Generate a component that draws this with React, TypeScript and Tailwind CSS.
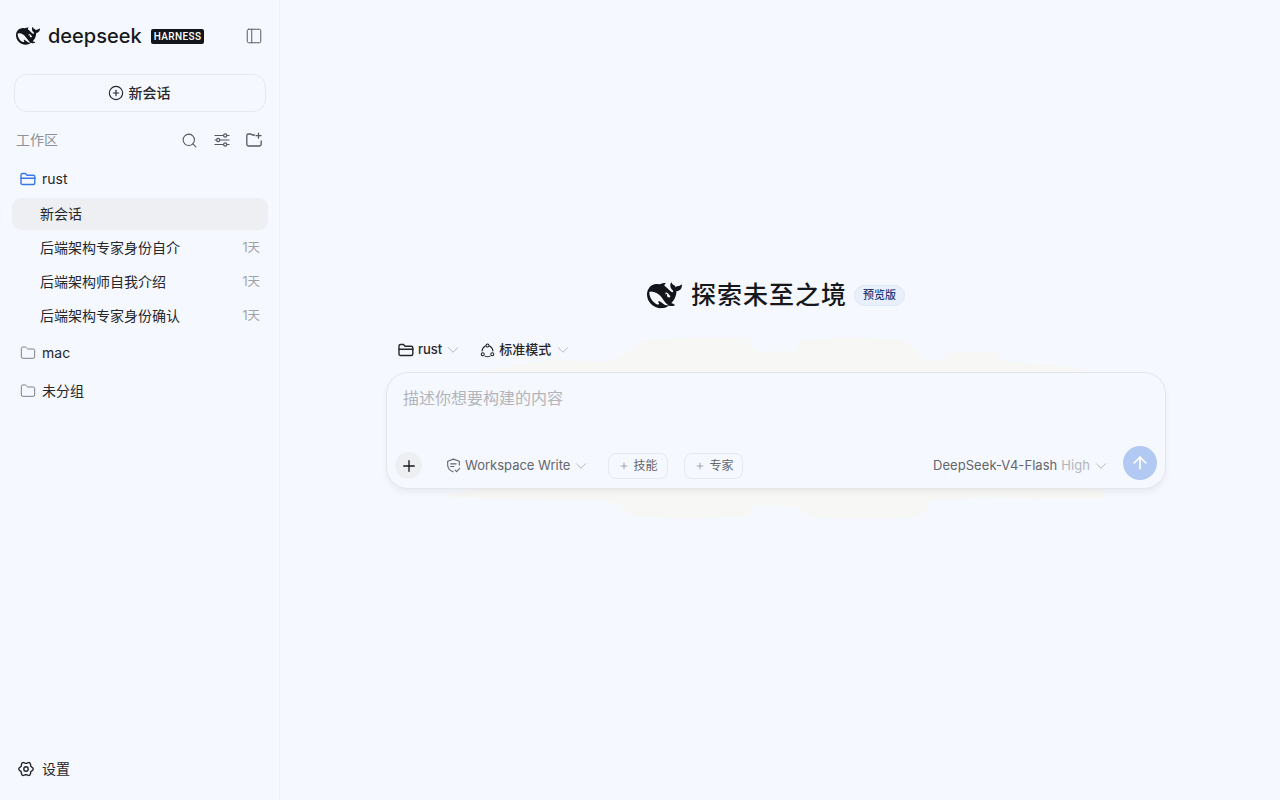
import React from 'react';
import { ArrowUp, ChevronDown, CirclePlus, Folder, PanelLeft, Plus, Search } from 'lucide-react';

const sessions = [
  { id: '1', title: '新会话', age: '', active: true },
  { id: '2', title: '后端架构专家身份自介', age: '1天', active: false },
  { id: '3', title: '后端架构师自我介绍', age: '1天', active: false },
  { id: '4', title: '后端架构专家身份确认', age: '1天', active: false },
];

const Whale = ({ className }: { className: string }) => (
  <svg viewBox="0 0 24 24" className={className} fill="#14151a">
    <path d="M23.748 4.482c-.254-.124-.364.113-.512.234-.051.039-.094.09-.137.136-.372.397-.806.657-1.373.626-.829-.046-1.537.214-2.163.848-.133-.782-.575-1.248-1.247-1.548-.352-.156-.708-.311-.955-.65-.172-.241-.219-.51-.305-.774-.055-.16-.11-.323-.293-.35-.2-.031-.278.136-.356.276-.313.572-.434 1.202-.422 1.84.027 1.436.633 2.58 1.838 3.393.137.093.172.187.129.323-.082.28-.18.552-.266.833-.055.179-.137.217-.329.14a5.526 5.526 0 01-1.736-1.18c-.857-.828-1.631-1.742-2.597-2.458a11.365 11.365 0 00-.689-.471c-.985-.957.13-1.743.388-1.836.27-.098.093-.432-.779-.428-.872.004-1.67.295-2.687.684a3.055 3.055 0 01-.465.137 9.597 9.597 0 00-2.883-.102c-1.885.21-3.39 1.102-4.497 2.623C.082 8.606-.231 10.684.152 12.85c.403 2.284 1.569 4.175 3.36 5.653 1.858 1.533 3.997 2.284 6.438 2.14 1.482-.085 3.133-.284 4.994-1.86.47.234.962.327 1.78.397.63.059 1.236-.03 1.705-.128.735-.156.684-.837.419-.961-2.155-1.004-1.682-.595-2.113-.926 1.096-1.296 2.746-2.642 3.392-7.003.05-.347.007-.565 0-.845-.004-.17.035-.237.23-.256a4.173 4.173 0 001.545-.475c1.396-.763 1.96-2.015 2.093-3.517.02-.23-.004-.467-.247-.588zM11.581 18c-2.089-1.642-3.102-2.183-3.52-2.16-.392.024-.321.471-.235.763.09.288.207.486.371.739.114.167.192.416-.113.603-.673.416-1.842-.14-1.897-.167-1.361-.802-2.5-1.86-3.301-3.307-.774-1.393-1.224-2.887-1.298-4.482-.02-.386.093-.522.477-.592a4.696 4.696 0 011.529-.039c2.132.312 3.946 1.265 5.468 2.774.868.86 1.525 1.887 2.202 2.891.72 1.066 1.494 2.082 2.48 2.914.348.292.625.514.891.677-.802.09-2.14.11-3.054-.614zm1-6.44a.306.306 0 01.415-.287.302.302 0 01.2.288.306.306 0 01-.31.307.303.303 0 01-.304-.308zm3.11 1.596c-.2.081-.399.151-.59.16a1.245 1.245 0 01-.798-.254c-.274-.23-.47-.358-.552-.758a1.73 1.73 0 01.016-.588c.07-.327-.008-.537-.239-.727-.187-.156-.426-.199-.688-.199a.559.559 0 01-.254-.078c-.11-.054-.2-.19-.114-.358.028-.054.16-.186.192-.21.356-.202.767-.136 1.146.016.352.144.618.408 1.001.782.391.451.462.576.685.914.176.265.336.537.445.848.067.195-.019.354-.25.452z" />
  </svg>
);

const FolderTab = ({ className }: { className: string }) => (
  <svg viewBox="0 0 16 16" className={className} fill="none" stroke="currentColor" strokeWidth="1.400" strokeLinecap="round" strokeLinejoin="round">
    <path d="M1 12V4c0-.9.6-1.500 1.500-1.500h3l1.500 1.700h6.300c.9 0 1.500.6 1.500 1.500V12c0 .9-.6 1.500-1.500 1.500h-10.800C1.600 13.500 1 12.900 1 12z" />
    <path d="M1 7.200h14" />
  </svg>
);

const SlidersIcon = () => (
  <svg viewBox="0 0 16 16" className="h-4 w-4" fill="none" stroke="#55585f" strokeWidth="1.200" strokeLinecap="round">
    <path d="M1 3.500h8.500M13 3.500h2M1 8h1.500M6 8h9M1 12.500h8.500M13 12.500h2" />
    <circle cx="11.200" cy="3.500" r="1.600" />
    <circle cx="4.200" cy="8" r="1.600" />
    <circle cx="11.200" cy="12.500" r="1.600" />
  </svg>
);

const NewFolderIcon = () => (
  <svg viewBox="0 0 16 16" className="h-4 w-4" fill="none" stroke="#55585f" strokeWidth="1.300" strokeLinecap="round" strokeLinejoin="round">
    <path d="M8.500 3H6.300L5 2H2.500C1.500 2 .8 2.700 .8 3.700v8.600c0 1 .7 1.700 1.700 1.700h11c1 0 1.700-.7 1.700-1.700V9" />
    <path d="M12.500 1.200v5M10 3.700h5" />
  </svg>
);

const ModeIcon = () => (
  <svg viewBox="0 0 16 16" className="h-[15px] w-[15px]" fill="none" stroke="#1f2024" strokeWidth="1.100" strokeLinecap="round">
    <circle cx="8" cy="2.700" r="1.600" />
    <circle cx="2.900" cy="12" r="1.600" />
    <circle cx="13.100" cy="12" r="1.600" />
    <path d="M5.700 3.200C3.700 4.300 2.400 6.300 2.200 8.600M10.300 3.200c2 1.100 3.300 3.100 3.500 5.400M5.300 14c1.600.8 3.800.8 5.400 0" />
  </svg>
);

const ShieldIcon = () => (
  <svg viewBox="0 0 16 16" className="h-[15px] w-[15px]" fill="none" stroke="#63666d" strokeWidth="1.200" strokeLinecap="round" strokeLinejoin="round">
    <path d="M14.200 7.500V3.400L8 1.200 1.800 3.400v4c0 3.400 2.400 6 5.800 7.300" />
    <path d="M5 6.200h5.800M5 9h3.300M9.800 13l1.500 1.500 3.300-3.400" />
  </svg>
);

// soft six lobed outline of the settings gear
const gearPath = Array.from({ length: 72 }, (_, i) => {
  const a = (i / 72) * Math.PI * 2;
  const r = 6.400 + 0.800 * Math.cos(6 * a);
  return `${i === 0 ? 'M' : 'L'}${(8 + r * Math.cos(a)).toFixed(2)} ${(8 + r * Math.sin(a)).toFixed(2)}`;
}).join('') + 'Z';

const GearIcon = () => (
  <svg viewBox="0 0 16 16" className="h-4 w-4" fill="none" stroke="#26272b" strokeWidth="1.400" strokeLinejoin="round">
    <path d={gearPath} />
    <circle cx="8" cy="8" r="2.200" />
  </svg>
);

const Blob = () => (
  <svg viewBox="447 338 660 182" className="absolute left-[447px] top-[338px] h-[182px] w-[660px]" fill="#f7f7f5" stroke="#f7f7f5" strokeWidth="3" strokeLinejoin="round">
    <polygon points="553,361 607,363 622,357 633,351 647,341 700,339 747,339 753,351 760,353 795,353 803,341 850,339 903,341 915,352 923,362 943,362 950,354 997,354 998,362 1027,365 1047,366 1085,371 1103,497 1040,497 980,496 930,499 925,508 917,516 860,517 808,516 800,505 752,504 747,515 690,517 632,515 622,504 600,499 520,498 449,496 480,490 480,372" />
  </svg>
);

export default function App() {
  return (
    <div className="relative flex h-[800px] w-[1280px] overflow-hidden bg-[#f5f8fe] text-[#26272b] [font-family:Inter,'Noto_Sans_CJK_SC',sans-serif]">
      <aside className="flex w-[280px] shrink-0 flex-col border-r border-[#eef0f4] pb-[19px] pl-3 pr-[11px]">
        <div className="flex h-[72px] items-center pl-1 pr-[5px]">
          <Whale className="h-6 w-6" />
          <span className="ml-2 text-[20px] font-medium leading-none text-[#17181c]">deepseek</span>
          <span className="ml-[9px] flex h-[15px] items-center rounded-[2px] bg-[#14151a] px-[3px] text-[10px] font-medium tracking-[0.4px] text-white [font-family:Roboto,sans-serif]">HARNESS</span>
          <PanelLeft className="ml-auto h-[18px] w-[18px] text-[#55585f]" strokeWidth={1.300} />
        </div>
        <button className="mx-[2px] mt-[2px] flex h-[38px] items-center justify-center gap-[5px] rounded-[13px] border border-[#e6e8ec] pr-[2px] text-sm font-medium">
          <CirclePlus className="h-4 w-4" strokeWidth={1.700} />
          新会话
        </button>
        <div className="mt-4 flex h-[24px] items-center pl-1 pr-[6px]">
          <span className="text-sm text-[#8f9196]">工作区</span>
          <div className="ml-auto flex items-center gap-4">
            <Search className="h-[17px] w-[17px] text-[#55585f]" strokeWidth={1.500} />
            <SlidersIcon />
            <NewFolderIcon />
          </div>
        </div>
        <div className="mt-[15px] flex h-[24px] items-center gap-[6px] pl-2 text-sm">
          <FolderTab className="h-4 w-4 text-[#3b78e7]" />
          rust
        </div>
        <div className="mt-[7px] flex flex-col gap-[2px]">
          {sessions.map((s) => (
            <div key={s.id} className={`flex h-8 items-center justify-between rounded-[9px] pl-7 pr-2 text-sm ${s.active ? 'bg-[#eeeff3]' : ''}`}>
              <span>{s.title}</span>
              <span className="text-[12.500px] text-[#a0a2a7]">{s.age}</span>
            </div>
          ))}
        </div>
        <div className="mt-[9px] flex h-[24px] items-center gap-[6px] pl-2 text-sm">
          <Folder className="h-4 w-4 text-[#6d7077]" strokeWidth={1.300} />
          mac
        </div>
        <div className="mt-[14px] flex h-[24px] items-center gap-[6px] pl-2 text-sm">
          <Folder className="h-4 w-4 text-[#6d7077]" strokeWidth={1.300} />
          未分组
        </div>
        <div className="mt-auto flex h-[24px] items-center gap-2 pl-[6px] text-sm">
          <GearIcon />
          设置
        </div>
      </aside>

      <Blob />

      <main className="relative flex flex-1 flex-col items-center pr-2 pt-[278px]">
        <div className="flex h-[34px] items-center">
          <Whale className="h-[35px] w-[35px]" />
          <h1 className="ml-[9px] text-[25px] font-medium leading-none tracking-[1px] text-[#17181c]">探索未至之境</h1>
          <span className="ml-[7px] flex h-[21px] items-center rounded-full border border-[#dfe8f8] bg-[#e9f0fc] px-2 text-[11px] font-medium text-[#1e3a78]">预览版</span>
        </div>
        <div className="mt-[22px] flex h-[32px] w-[780px] items-center pl-3 text-[13px] font-medium">
          <FolderTab className="h-4 w-4" />
          <span className="ml-1">rust</span>
          <ChevronDown className="ml-[2px] h-[18px] w-[18px] text-[#b3b5ba]" strokeWidth={1.300} />
          <span className="ml-[18px]"><ModeIcon /></span>
          <span className="ml-1">标准模式</span>
          <ChevronDown className="ml-[3px] h-[18px] w-[18px] text-[#b3b5ba]" strokeWidth={1.300} />
        </div>
        <div className="mt-[6px] flex h-[117px] w-[780px] flex-col rounded-[22px] border border-[#e5e6ea] bg-[#f5f8fe] shadow-[0_4px_6px_rgba(20,25,40,0.05)]">
          <div className="px-4 pt-[14px] text-base leading-[22px] text-[#b3b5ba]">描述你想要构建的内容</div>
          <div className="mt-auto flex items-center pb-2 pl-2 pr-2">
            <div className="flex flex-1 items-center pt-[5px]">
              <button className="flex h-[27px] w-[27px] items-center justify-center rounded-full bg-[#eeeff3]">
                <Plus className="h-[18px] w-[18px] text-[#17181c]" strokeWidth={1.800} />
              </button>
              <span className="ml-[24px]"><ShieldIcon /></span>
              <span className="ml-1 text-[13px] text-[#63666d]">Workspace Write</span>
              <ChevronDown className="ml-[2px] h-[18px] w-[18px] text-[#b3b5ba]" strokeWidth={1.300} />
              <span className="ml-[18px] flex h-[26px] items-center gap-1 rounded-[8px] border border-[#e6e8ec] px-[10px] text-xs text-[#63666d]">
                <Plus className="h-[10px] w-[10px]" strokeWidth={1.300} />
                技能
              </span>
              <span className="ml-4 flex h-[26px] items-center gap-1 whitespace-nowrap rounded-[8px] border border-[#e6e8ec] pl-[10px] pr-[9px] text-xs text-[#63666d]">
                <Plus className="h-[10px] w-[10px]" strokeWidth={1.300} />
                专家
              </span>
              <span className="ml-auto text-[13px] tracking-[0.05px] text-[#63666d]">DeepSeek-V4-Flash</span>
              <span className="ml-1 text-[13px] tracking-[0.05px] text-[#b3b5ba]">High</span>
              <ChevronDown className="ml-[2px] mr-[1px] h-[18px] w-[18px] text-[#b3b5ba]" strokeWidth={1.300} />
            </div>
            <button className="ml-3 flex h-[34px] w-[34px] items-center justify-center rounded-full bg-[#b2c9f3]">
              <ArrowUp className="h-5 w-5 text-white" strokeWidth={2} />
            </button>
          </div>
        </div>
      </main>
    </div>
  );
}
